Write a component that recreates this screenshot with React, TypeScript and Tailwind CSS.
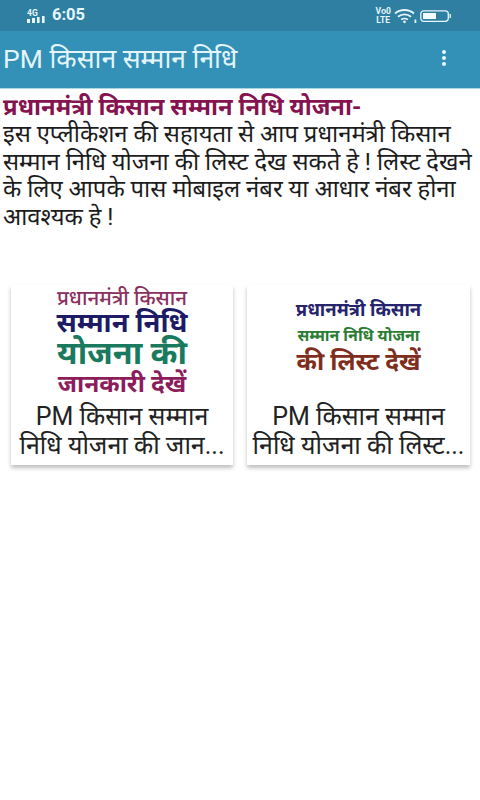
const font = "font-['Roboto','Noto_Sans','Noto_Sans_Devanagari','Liberation_Sans',sans-serif]";

function SignalIcon() {
  return (
    <svg width="22" height="16" viewBox="0 0 22 16" fill="#e6f6fb">
      <rect x="0" y="11" width="3" height="4" />
      <rect x="5" y="10" width="3" height="5" />
      <rect x="10" y="9" width="2.6" height="6" />
      <rect x="15" y="8" width="2.6" height="7" />
      <text x="0" y="7.5" fontSize="8.5" fontWeight="700" fontFamily="Roboto, sans-serif">4G</text>
    </svg>
  );
}

function WifiIcon() {
  return (
    <svg width="23" height="16" viewBox="0 0 23 16" fill="none" stroke="#e6f6fb" strokeWidth="1.8">
      <path d="M1 5.5C6.5 .8 14.5 .8 20 5.5" />
      <path d="M4 8.8C7.8 5.6 13.2 5.6 17 8.8" />
      <path d="M7.2 11.6C9 10.2 12 10.2 13.8 11.6" />
      <circle cx="10.5" cy="13.8" r="1.4" fill="#e6f6fb" stroke="none" />
      <rect x="20.5" y="11.5" width="1.8" height="3.5" fill="#e6f6fb" stroke="none" />
    </svg>
  );
}

function BatteryIcon() {
  return (
    <svg width="32" height="14" viewBox="0 0 32 14" fill="none">
      <rect x="0.8" y="1.8" width="27.5" height="10.5" rx="3" stroke="#e6f6fb" strokeWidth="1.3" />
      <rect x="3" y="4" width="13" height="6" fill="#f2fbfe" />
      <path d="M30.2 5v4" stroke="#e6f6fb" strokeWidth="1.4" />
    </svg>
  );
}

function StatusBar() {
  return (
    <div className="h-[31px] bg-[#2f7fa2] flex items-center justify-between pl-[27px] pr-[28px]">
      <div className="flex items-center gap-[3px]">
        <SignalIcon />
        <span className="text-[16.5px] leading-none font-bold text-[#e6f6fb] font-['Roboto',sans-serif]">6:05</span>
      </div>
      <div className="flex items-center gap-[3px]">
        <div className="flex flex-col items-center text-[8.5px] leading-[9px] font-bold text-[#e6f6fb] font-['Roboto',sans-serif]">
          <span>Vᴏ0</span>
          <span>LTE</span>
        </div>
        <WifiIcon />
        <BatteryIcon />
      </div>
    </div>
  );
}

function AppBar() {
  return (
    <div className="h-[58px] bg-[#3390b7] flex items-center justify-between pl-[3px] pr-[34px] border-b border-[#a9d6e6]">
      <span className={`text-[26.5px] leading-none text-[#e3f5fa] ${font}`}>PM किसान सम्मान निधि</span>
      <div className="flex flex-col gap-[1.5px] mb-[3px]">
        <span className="w-[4.5px] h-[4.5px] rounded-full bg-[#eaf7fb]" />
        <span className="w-[4.5px] h-[4.5px] rounded-full bg-[#eaf7fb]" />
        <span className="w-[4.5px] h-[4.5px] rounded-full bg-[#eaf7fb]" />
      </div>
    </div>
  );
}

function Card(props: { lines: string[]; children: React.ReactNode; className?: string }) {
  return (
    <div className={`bg-white shadow-[0_3px_4px_rgba(0,0,0,0.25)] flex flex-col ${props.className ?? ""}`}>
      <div className="h-[117px] flex flex-col items-center">{props.children}</div>
      <div className={`text-[25px] leading-[29px] text-center text-[#222] pb-[5px] whitespace-nowrap ${font}`}>
        {props.lines.map((l) => (
          <div key={l}>{l}</div>
        ))}
      </div>
    </div>
  );
}

export default function App() {
  return (
    <div className={`w-[480px] h-[800px] bg-white overflow-hidden ${font}`}>
      <StatusBar />
      <AppBar />
      <div className="pl-[3px] pt-[4px]">
        <p className="text-[23.8px] leading-[28px] font-bold text-[#85134f]">प्रधानमंत्री किसान सम्मान निधि योजना-</p>
        <p className="text-[23.8px] leading-[27.5px] text-[#1c1c1c]">
          इस एप्लीकेशन की सहायता से आप प्रधानमंत्री किसान सम्मान निधि योजना की लिस्ट देख सकते हे ! लिस्ट देखने के लिए आपके पास मोबाइल नंबर या आधार नंबर होना आवश्यक हे !
        </p>
      </div>
      <div className="flex justify-between pl-[11px] pr-[10px] mt-[54px]">
        <Card lines={["PM किसान सम्मान", "निधि योजना की जान..."]} className="w-[222px]">
          <span className="mt-[1px] text-[20.5px] leading-[24px] font-medium text-[#8a2f5e]">प्रधानमंत्री किसान</span>
          <span className="text-[27.5px] leading-[26px] font-bold text-[#1d1a66]">सम्मान निधि</span>
          <span className="text-[32.5px] leading-[34px] font-bold text-[#1a7a5e]">योजना की</span>
          <span className="text-[24.5px] leading-[28px] font-bold text-[#8c1d5c]">जानकारी देखें</span>
        </Card>
        <Card lines={["PM किसान सम्मान", "निधि योजना की लिस्ट..."]} className="w-[223px]">
          <span className="mt-[12px] text-[18.5px] leading-[26px] font-bold text-[#27246e]">प्रधानमंत्री किसान</span>
          <span className="text-[16px] leading-[26px] font-bold text-[#2b7d33]">सम्मान निधि योजना</span>
          <span className="text-[24.5px] leading-[26px] font-bold text-[#7d2e1c]">की लिस्ट देखें</span>
        </Card>
      </div>
    </div>
  );
}
